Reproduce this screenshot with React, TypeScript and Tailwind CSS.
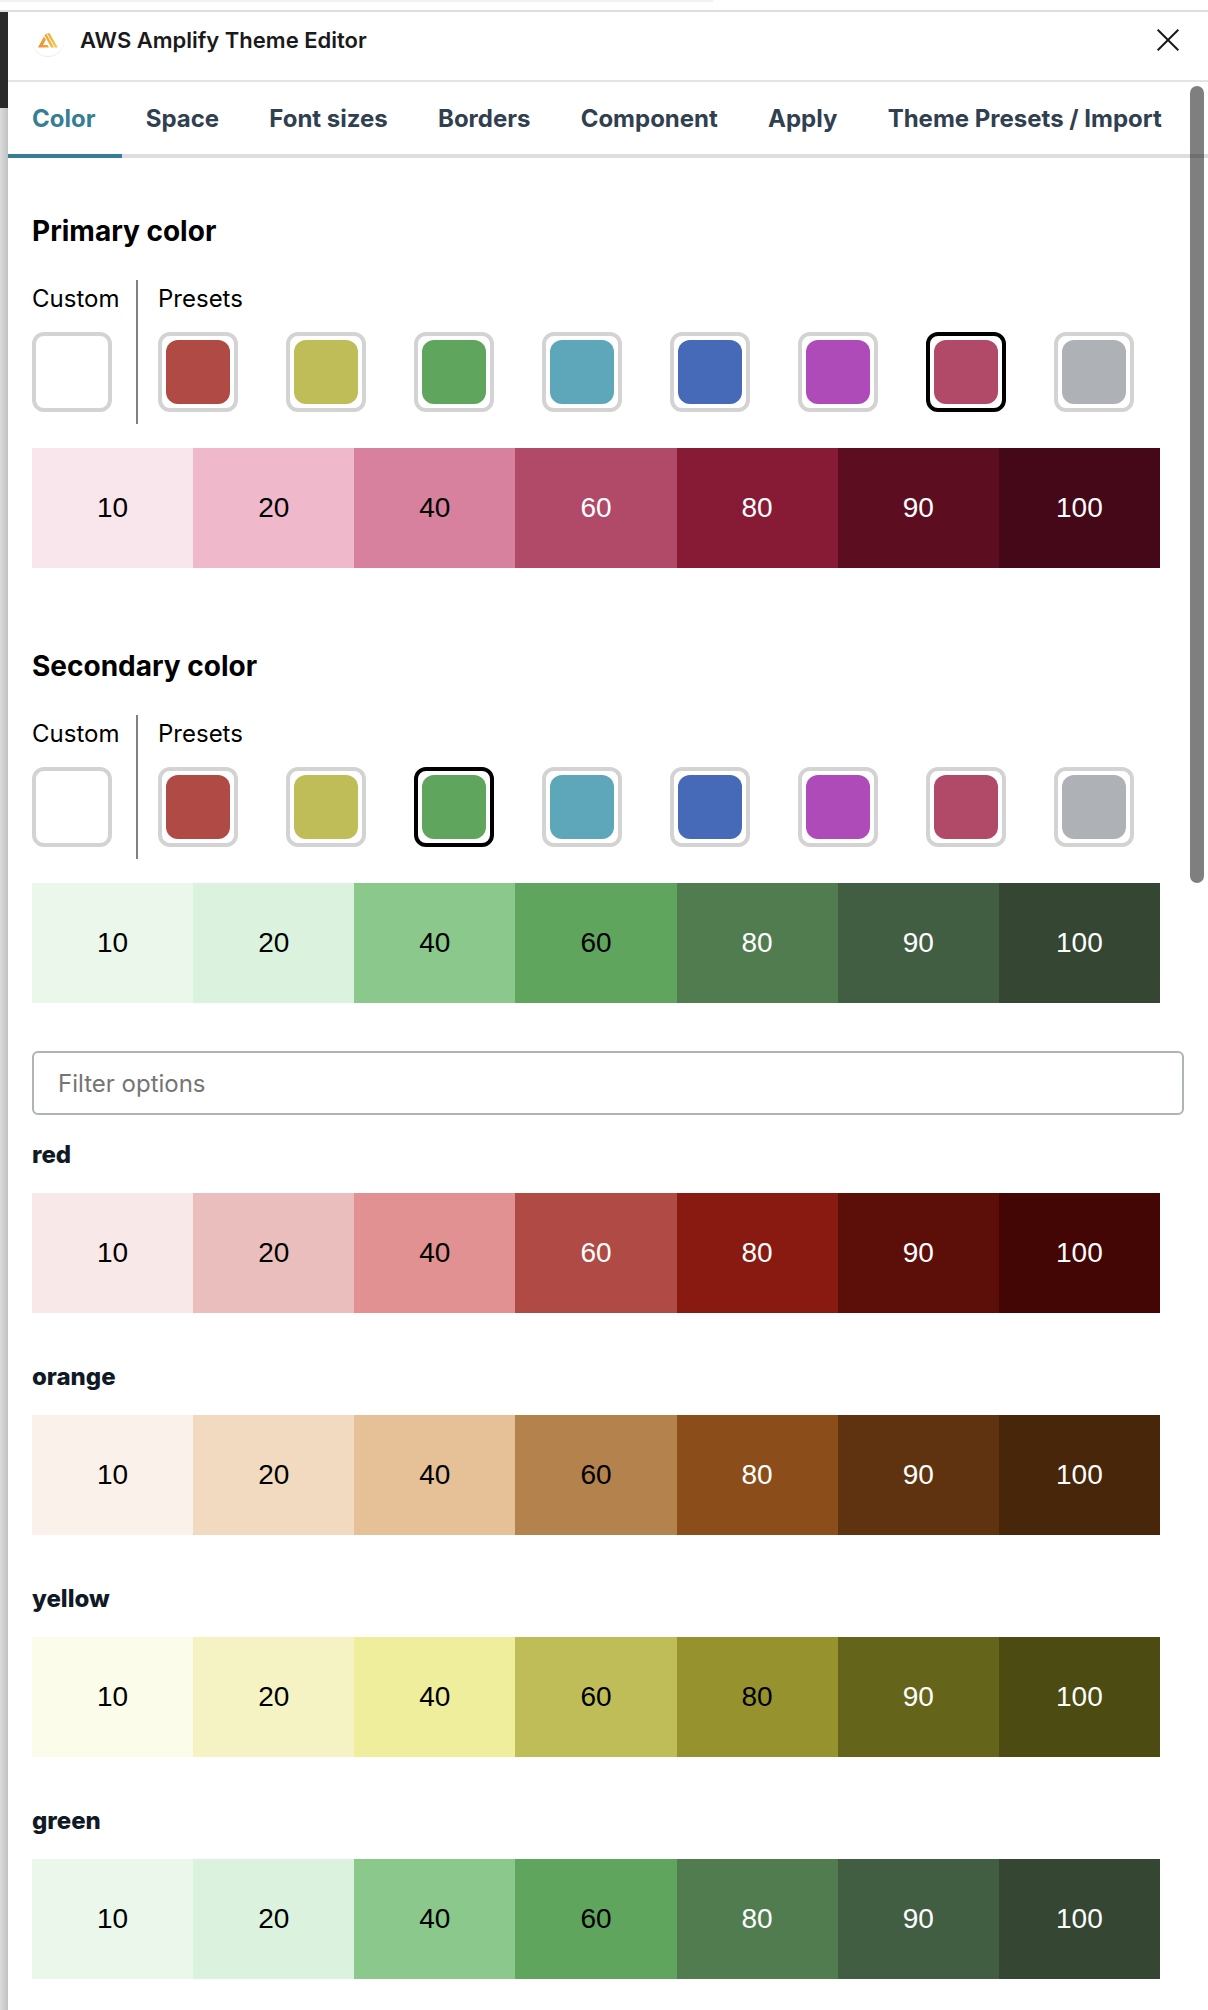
import { useState } from "react";

type Shade = { step: number; color: string; light?: boolean };

const steps = [10, 20, 40, 60, 80, 90, 100];

function scale(colors: string[], firstLight: number): Shade[] {
  return colors.map((color, i) => ({ step: steps[i], color, light: steps[i] >= firstLight }));
}

const pink = scale(["#f9e6ec", "#efb8cb", "#d8819e", "#b04a68", "#871b36", "#5c0e20", "#440818"], 60);
const green = scale(["#ecf7ec", "#dbf3de", "#8ac88b", "#60a55d", "#517c4f", "#415e42", "#354733"], 80);
const red = scale(["#f8e8e8", "#ebbebe", "#e19191", "#b04a44", "#891a12", "#5c0e08", "#440604"], 60);
const orange = scale(["#faf1ea", "#f1dac0", "#e6c096", "#b4824c", "#8b4d1a", "#603310", "#472609"], 80);
const yellow = scale(["#fbfdea", "#f5f3c4", "#eeee9c", "#bfbd57", "#96932f", "#64641a", "#4b4b12"], 90);

const palettes = [
  { name: "red", shades: red },
  { name: "orange", shades: orange },
  { name: "yellow", shades: yellow },
  { name: "green", shades: green },
];

const presets = [
  { name: "red", color: "#b04a44" },
  { name: "yellow", color: "#bfbd57" },
  { name: "green", color: "#60a55d" },
  { name: "teal", color: "#5ea7bb" },
  { name: "blue", color: "#466ab7" },
  { name: "purple", color: "#af4bb9" },
  { name: "pink", color: "#b04a68" },
  { name: "neutral", color: "#aeb2b7" },
];

const tabs = ["Color", "Space", "Font sizes", "Borders", "Component", "Apply", "Theme Presets / Import"];

function AmplifyLogo() {
  return (
    <span className="flex size-8 items-center justify-center rounded-full bg-white shadow-[0_1px_1px_rgba(0,0,0,0.08)]">
      <svg viewBox="0 0 20 15" className="h-[15px] w-5" aria-hidden="true">
        <defs>
          <linearGradient id="amp" x1="0" y1="0" x2="20" y2="0" gradientUnits="userSpaceOnUse">
            <stop offset="0" stopColor="#ee8a2f" />
            <stop offset="0.6" stopColor="#f3b03a" />
            <stop offset="1" stopColor="#f5cc4a" />
          </linearGradient>
        </defs>
        <g fill="url(#amp)">
          <path d="M0 14.5 6 3.500 7.900 6.800 5 12h4.600L11 14.500Z" />
          <path d="M6.600 2.600 8 .2 16 14.500H13.200Z" />
          <path d="M9 .2H11.600L19.800 14.500H17.100Z" />
        </g>
      </svg>
    </span>
  );
}

function ShadeBar({ shades }: { shades: Shade[] }) {
  return (
    <ul className="mr-6 grid grid-cols-7">
      {shades.map((s) => (
        <li
          key={s.step}
          className={`flex h-[120px] items-center justify-center font-['Liberation_Sans',sans-serif] text-[28px] leading-8 ${s.light ? "text-white" : "text-black"}`}
          style={{ backgroundColor: s.color }}
        >
          {s.step}
        </li>
      ))}
    </ul>
  );
}

function ColorPicker({ title, initial, shades }: { title: string; initial: string; shades: Shade[] }) {
  const [selected, setSelected] = useState(initial);
  return (
    <section>
      <h2 className="text-[28px] leading-9 font-bold text-black">{title}</h2>
      <div className="mt-[31px] flex text-2xl leading-[38px] text-black">
        <div className="w-[106px] shrink-0 border-r-2 border-[#808080] pb-3">
          <p>Custom</p>
          <button
            type="button"
            aria-label={`Custom ${title}`}
            className="mt-3.5 block size-20 rounded-xl border-4 border-[#d3d3d3] bg-white"
          />
        </div>
        <div className="pb-3 pl-5">
          <p>Presets</p>
          <div className="mt-3.5 flex gap-12">
            {presets.map((p) => (
              <button
                key={p.name}
                type="button"
                aria-label={p.name}
                aria-pressed={p.name === selected}
                onClick={() => setSelected(p.name)}
                className={`size-20 rounded-xl border-4 p-1 ${p.name === selected ? "border-black" : "border-[#d3d3d3]"}`}
              >
                <span className="block size-16 rounded-xl" style={{ backgroundColor: p.color }} />
              </button>
            ))}
          </div>
        </div>
      </div>
      <div className="mt-6">
        <ShadeBar shades={shades} />
      </div>
    </section>
  );
}

export default function App() {
  const [tab, setTab] = useState("Color");
  const [filter, setFilter] = useState("");
  return (
    <div className="flex h-screen flex-col overflow-hidden bg-white font-['Inter',sans-serif]">
      <div className="h-0.5 w-[59%] shrink-0 bg-[#f2f2f2]" />
      <div className="mt-2 h-0.5 shrink-0 bg-[#dcdddd]" />
      <div className="flex min-h-0 flex-1">
        <div className="flex w-2 shrink-0 flex-col">
          <div className="h-24 bg-[#2a2a2a]" />
          <div className="flex-1 bg-linear-to-r from-[#dcdcdc] to-[#c2c2c2]" />
        </div>
        <div className="relative flex min-w-0 flex-1 flex-col">
          <header className="flex h-[70px] shrink-0 items-center border-b-2 border-[#e4e4e4] pr-[29px] pb-3 pl-6">
            <AmplifyLogo />
            <h1 className="ml-4 text-[22px] leading-8 font-semibold text-[#1a1a1a]">AWS Amplify Theme Editor</h1>
            <button type="button" aria-label="Close" className="ml-auto">
              <svg viewBox="0 0 22 22" className="size-[22px]" fill="none" stroke="#1a1a1a" strokeWidth="2" aria-hidden="true">
                <path d="M.7.7 21.300 21.300M21.300.7.7 21.300" />
              </svg>
            </button>
          </header>
          <div role="tablist" className="flex shrink-0">
            {tabs.map((t) => (
              <button
                key={t}
                type="button"
                role="tab"
                aria-selected={t === tab}
                onClick={() => setTab(t)}
                className={`h-[76px] shrink-0 grow border-b-4 px-6 pt-0.5 text-left text-2xl font-bold whitespace-nowrap ${t === tab ? "border-[#357e95] text-[#357e95]" : "border-[#dcdee0] text-[#304050]"}`}
              >
                {t}
              </button>
            ))}
            <div className="w-5 border-b-4 border-[#dcdee0]" />
          </div>
          <main className="min-h-0 flex-1 overflow-hidden px-6 pt-[55px]">
            <ColorPicker title="Primary color" initial="pink" shades={pink} />
            <div className="mt-20">
              <ColorPicker title="Secondary color" initial="green" shades={green} />
            </div>
            <input
              type="text"
              aria-label="Filter options"
              placeholder="Filter options"
              value={filter}
              onChange={(e) => setFilter(e.target.value)}
              className="mt-12 block h-16 w-full rounded-md border-2 border-[#aeb3b7] px-6 text-2xl placeholder:text-[#757575]"
            />
            <div className="mt-[21px] flex flex-col gap-[45px]">
              {palettes
                .filter((p) => p.name.includes(filter))
                .map((p) => (
                  <section key={p.name} className="flex flex-col gap-5">
                    <h3 className="pt-px text-2xl leading-9 font-extrabold text-[#101a26]">{p.name}</h3>
                    <ShadeBar shades={p.shades} />
                  </section>
                ))}
            </div>
          </main>
          <div className="absolute top-[74px] right-1 h-[797px] w-3.5 rounded-full bg-black/50" />
        </div>
      </div>
    </div>
  );
}
